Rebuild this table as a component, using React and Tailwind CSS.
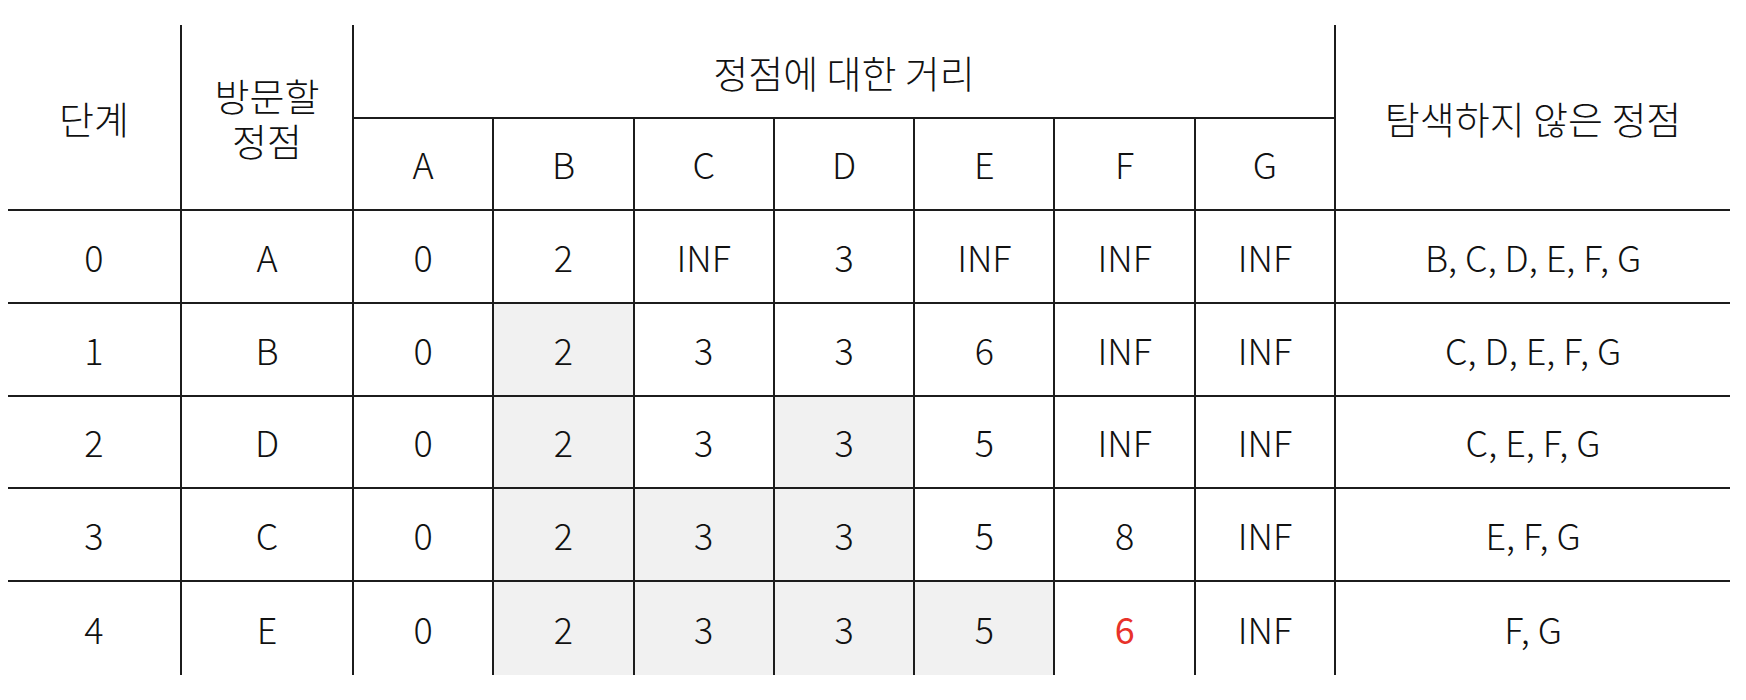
const cols = ['A', 'B', 'C', 'D', 'E', 'F', 'G']

const rows = [
  { step: '0', node: 'A', dist: ['0', '2', 'INF', '3', 'INF', 'INF', 'INF'], rest: 'B, C, D, E, F, G', gray: [] },
  { step: '1', node: 'B', dist: ['0', '2', '3', '3', '6', 'INF', 'INF'], rest: 'C, D, E, F, G', gray: [1] },
  { step: '2', node: 'D', dist: ['0', '2', '3', '3', '5', 'INF', 'INF'], rest: 'C, E, F, G', gray: [1, 3] },
  { step: '3', node: 'C', dist: ['0', '2', '3', '3', '5', '8', 'INF'], rest: 'E, F, G', gray: [1, 2, 3] },
  { step: '4', node: 'E', dist: ['0', '2', '3', '3', '5', '6', 'INF'], rest: 'F, G', gray: [1, 2, 3, 4], red: 5 },
]

function Cell({ children, className = '' }) {
  return (
    <div className={`flex items-center justify-center text-center border-[#1c1c1c] ${className}`}>
      {children}
    </div>
  )
}

export default function App() {
  return (
    <div className="w-[1746px] h-[700px] bg-white pl-[8px] pt-[25px] text-[#111] font-light text-[36px] leading-[45px] font-['Noto_Sans_CJK_KR','Noto_Sans',sans-serif]">
      <div className="grid grid-cols-[174px_172px_repeat(7,140.3px)_394px] grid-rows-[93.5px_repeat(6,92.7px)]">
        <Cell className="row-span-2 border-r-2 border-b-2 text-[38px]">단계</Cell>
        <Cell className="row-span-2 border-r-2 border-b-2 flex-col text-[38px] leading-[45px]">
          <div>방문할</div>
          <div>정점</div>
        </Cell>
        <Cell className="col-span-7 border-r-2 border-b-2 text-[38px] pt-[1px]">정점에 대한 거리</Cell>
        <Cell className="row-span-2 border-b-2 text-[38px]">탐색하지 않은 정점</Cell>
        {cols.map((c) => (
          <Cell key={c} className="border-r-2 border-b-2">{c}</Cell>
        ))}

        {rows.map((r, i) => {
          const last = i === rows.length - 1
          const b = last ? '' : 'border-b-2'
          return [
            <Cell key={`s${i}`} className={`border-r-2 ${b}`}>{r.step}</Cell>,
            <Cell key={`n${i}`} className={`border-r-2 ${b}`}>{r.node}</Cell>,
            ...r.dist.map((d, j) => (
              <Cell
                key={`d${i}${j}`}
                className={`border-r-2 ${b} ${r.gray.includes(j) ? 'bg-[#f1f1f1]' : ''} ${r.red === j ? 'text-[#e8322a] font-normal' : ''}`}
              >
                {d}
              </Cell>
            )),
            <Cell key={`r${i}`} className={b}>{r.rest}</Cell>,
          ]
        })}
      </div>
    </div>
  )
}
